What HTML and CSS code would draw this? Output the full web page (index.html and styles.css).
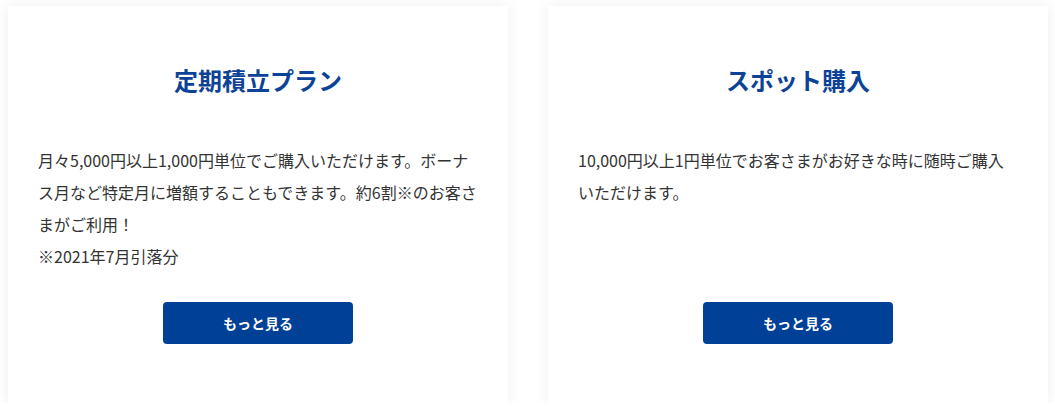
FILE: index.html
```html
<!DOCTYPE html>
<html lang="ja">
<head>
<meta charset="utf-8">
<link rel="stylesheet" href="styles.css">
</head>
<body>
<div class="cards">
  <section class="card">
    <h2 class="card-title">定期積立プラン</h2>
    <p class="card-text">月々5,000円以上1,000円単位でご購入いただけます。ボーナス月など特定月に増額することもできます。約6割※のお客さまがご利用！<br>※2021年7月引落分</p>
    <a class="card-btn" href="#">もっと見る</a>
  </section>
  <section class="card">
    <h2 class="card-title">スポット購入</h2>
    <p class="card-text">10,000円以上1円単位でお客さまがお好きな時に随時ご購入いただけます。</p>
    <a class="card-btn" href="#">もっと見る</a>
  </section>
</div>
</body>
</html>
```
FILE: styles.css
```css
html, body {
  margin: 0;
  padding: 0;
  background: #ffffff;
}
body {
  font-family: "Noto Sans CJK JP", "Noto Sans", sans-serif;
  color: #333333;
}
.cards {
  display: grid;
  grid-template-columns: 500px 500px;
  column-gap: 40px;
  padding: 6px 8px 0 8px;
  height: 397px;
}
.card {
  background: #ffffff;
  box-shadow: 0 0 14px rgba(0, 0, 0, 0.07);
  display: flex;
  flex-direction: column;
  align-items: center;
  padding: 56px 30px 59px 30px;
  box-sizing: border-box;
  height: 397px;
}
.card-title {
  margin: 0;
  font-size: 24px;
  line-height: 36px;
  font-weight: 700;
  color: #0d4397;
  text-align: center;
}
.card-text {
  margin: 46px 0 0 0;
  align-self: stretch;
  font-size: 16px;
  line-height: 32px;
  color: #333333;
}
.card-btn {
  margin-top: auto;
  width: 190px;
  height: 42px;
  border-radius: 4px;
  background: #004097;
  color: #ffffff;
  font-size: 14px;
  font-weight: 700;
  text-decoration: none;
  display: flex;
  align-items: center;
  justify-content: center;
}
```
